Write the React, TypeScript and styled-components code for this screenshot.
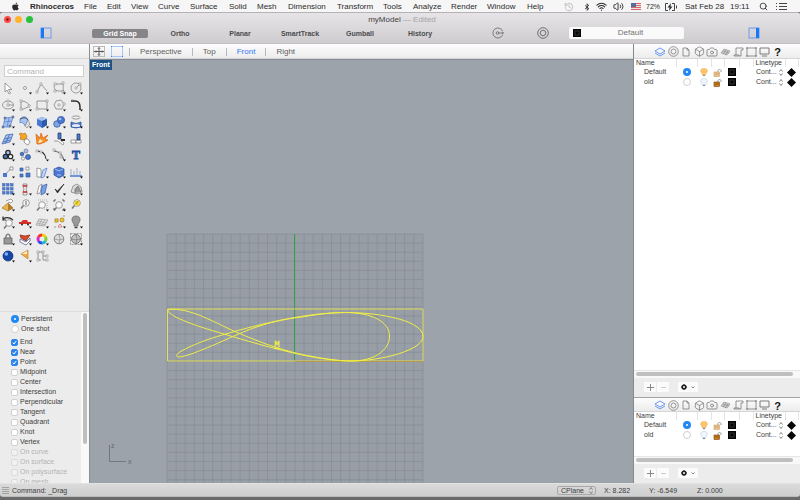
import React from "react";
import styled, { createGlobalStyle } from "styled-components";
import { FaApple, FaBluetoothB } from "react-icons/fa";
import { History, Wifi, Volume2, Search, Box, Camera } from "lucide-react";

const GlobalStyle = createGlobalStyle`
  * { box-sizing: border-box; }
  html, body { margin: 0; }
  body, button, input, select {
    font-family: "Liberation Sans", Arial, Helvetica, sans-serif;
    font-size: 7px;
    line-height: 10px;
    color: #3c3c3c;
  }
  button { border: 0; padding: 0; margin: 0; background: none; }
  svg { display: block; flex: none; }
`;

const Desktop = styled.div`
  height: 100vh;
  display: flex;
  flex-direction: column;
  background: #6c6a6c;
  overflow: hidden;
`;

/* ---------- system menu bar ---------- */

const MenuBar = styled.header`
  display: flex;
  height: 12px;
  flex: none;
  padding: 1px 12px 0 11px;
  align-items: center;
  background: #f7f6f6;
  font-size: 8px;
  line-height: 11px;
`;
const Menus = styled.nav`
  display: grid;
  grid-template-columns: 19px 54px 23px 24px 27px 32px 39px 28px 31px 49px 46px 30px 38px 36px 40px 24px;
  align-items: center;
`;
const MenuButton = styled.button<{ $strong?: boolean }>`
  font-size: 8px;
  line-height: 11px;
  text-align: left;
  white-space: nowrap;
  color: #2b2b2b;
  font-weight: ${(p) => (p.$strong ? 700 : 400)};
`;
const StatusItems = styled.div`
  margin-left: auto;
  display: grid;
  grid-template-columns: 19px 13px 17px 18px 15px 18px 21px 45px 29px 17px 12px;
  align-items: center;
  white-space: nowrap;
  color: #2b2b2b;
`;
const Percent = styled.span`
  font-size: 7px;
`;

/* ---------- window chrome ---------- */

const Window = styled.div`
  flex: 1;
  min-height: 0;
  display: flex;
  flex-direction: column;
  margin-bottom: 3px;
  border-radius: 3px;
  overflow: hidden;
`;
const Chrome = styled.div`
  flex: none;
  border-top: 1px solid #b5b3b5;
  border-bottom: 1px solid #c1bfc1;
  background: linear-gradient(#e6e4e6, #cecccf);
`;
const TitleRow = styled.div`
  display: grid;
  grid-template-columns: 1fr auto 1fr;
  align-items: center;
  height: 13px;
  padding-left: 4px;
`;
const Lights = styled.div`
  display: flex;
  gap: 4px;
`;
const Light = styled.button<{ $color: string }>`
  display: grid;
  place-items: center;
  width: 7px;
  height: 7px;
  border-radius: 50%;
  background: ${(p) => p.$color};
`;
const Title = styled.h1`
  margin: 0;
  font-size: 8px;
  line-height: 12px;
  font-weight: 400;
  color: #424242;
  span { color: #a5a3a5; }
`;
const ToolbarRow = styled.div`
  display: flex;
  align-items: center;
  height: 17px;
  padding: 0 40px 3px;
`;
const Toggles = styled.div`
  display: grid;
  grid-template-columns: repeat(6, 60px);
  justify-items: center;
  margin-left: 38px;
`;
const Toggle = styled.button<{ $on?: boolean }>`
  width: 56px;
  height: 9px;
  border-radius: 2px;
  font-size: 7px;
  line-height: 9px;
  font-weight: 700;
  white-space: nowrap;
  color: ${(p) => (p.$on ? "#fff" : "#4c4b4d")};
  background: ${(p) => (p.$on ? "#858486" : "transparent")};
`;
const RoundTools = styled.div`
  display: flex;
  gap: 33px;
  margin-left: 42px;
`;
const LayerField = styled.button`
  display: flex;
  align-items: center;
  width: 115px;
  height: 12px;
  margin-left: 20px;
  padding: 0 4px;
  border-radius: 2px;
  background: #fbfafb;
  font-size: 8px;
  color: #707070;
  span { flex: 1; }
`;
const IconButton = styled.button<{ $end?: boolean }>`
  display: grid;
  place-items: center;
  margin-left: ${(p) => (p.$end ? "auto" : "0")};
`;

/* ---------- body ---------- */

const Body = styled.div`
  flex: 1;
  min-height: 0;
  display: flex;
`;
const Strip = styled.div<{ $short?: boolean }>`
  display: flex;
  flex: none;
  align-items: center;
  height: ${(p) => (p.$short ? 14 : 15)}px;
  padding-top: 1px;
  background: linear-gradient(#fdfdfd, #ececec);
  border-bottom: 1px solid #d6d6d6;
`;
const Sidebar = styled.aside`
  width: 90px;
  flex: none;
  display: flex;
  flex-direction: column;
  background: #ececec;
  border-right: 1px solid #8b8e92;
`;
const CommandInput = styled.input`
  width: 80px;
  height: 12px;
  margin: 6px 4px 3px;
  padding: 0 2px;
  border: 1px solid #cfcfcf;
  background: #fff;
  font-size: 8px;
  outline: 0;
  &::placeholder { color: #b4b4b4; opacity: 1; }
`;
const Palette = styled.div`
  display: grid;
  grid-template-columns: repeat(5, 1fr);
  grid-auto-rows: 1fr;
  width: 84px;
  height: 184px;
`;
const Tool = styled.button`
  display: grid;
  place-items: center;
`;
const SnapArea = styled.div`
  flex: 1;
  min-height: 0;
  display: flex;
  margin-top: 47px;
  border-top: 1px solid #dcdcdc;
  overflow: hidden;
`;
const SnapList = styled.div`
  flex: 1;
  padding: 2px 0 0 11px;
`;
const SnapGroup = styled.div`
  margin-bottom: 3px;
`;
const SnapLabel = styled.label<{ $off?: boolean }>`
  display: flex;
  align-items: center;
  gap: 2px;
  height: 10px;
  white-space: nowrap;
  color: ${(p) => (p.$off ? "#b3b3b3" : "#3c3c3c")};
`;
const Check = styled.input`
  appearance: none;
  flex: none;
  width: 7px;
  height: 7px;
  margin: 0;
  border: 1px solid #d0d0d0;
  border-radius: 2px;
  background: #fff;
  &:disabled { background: #f2f2f2; border-color: #dadada; }
  &:checked {
    border-color: #2b84ee;
    background: #2b84ee url("data:image/svg+xml,%3Csvg xmlns='http://www.w3.org/2000/svg' viewBox='0 0 5 5'%3E%3Cpath d='M.8 2.6 2 4 4.3.9' fill='none' stroke='white' stroke-width='1'/%3E%3C/svg%3E");
  }
`;
const Radio = styled.input`
  appearance: none;
  flex: none;
  display: block;
  width: 8px;
  height: 8px;
  margin: 0;
  border: 1px solid #cfcfcf;
  border-radius: 50%;
  background: #fff;
  &:checked { border: 3px solid #2089f5; }
`;
const ScrollTrack = styled.div`
  width: 8px;
  padding: 1px 1px 0 2px;
  background: #f9f9f9;
`;
const ScrollThumb = styled.div`
  width: 4px;
  height: 131px;
  border-radius: 2px;
  background: #bebebe;
`;

/* ---------- viewport ---------- */

const Center = styled.main`
  flex: 1;
  min-width: 0;
  display: flex;
  flex-direction: column;
`;
const ViewIcons = styled.div`
  display: flex;
  gap: 6px;
  padding: 0 6px 0 3px;
`;
const ViewTab = styled.button<{ $active?: boolean }>`
  height: 8px;
  padding: 0 10px;
  border-left: 1px solid #b8b8b8;
  font-size: 8px;
  line-height: 8px;
  color: ${(p) => (p.$active ? "#3478f6" : "#606060")};
`;
const Viewport = styled.section`
  flex: 1;
  min-height: 0;
  display: grid;
  background: #9ca3ab;
  border-top: 1px solid #858b92;
  > * { grid-area: 1 / 1; }
`;
const Scene = styled.svg`
  width: 100%;
  height: 100%;
  min-height: 0;
`;
const ViewName = styled.h2`
  justify-self: start;
  align-self: start;
  z-index: 1;
  margin: 0;
  padding: 0 2px;
  font-size: 7px;
  line-height: 10px;
  color: #fff;
  background: #1c5288;
`;

/* ---------- right panels ---------- */

const Panels = styled.aside`
  width: 167px;
  flex: none;
  display: flex;
  flex-direction: column;
  background: #fff;
  border-left: 1px solid #85888c;
`;
const Panel = styled.section<{ $grow?: boolean }>`
  flex: ${(p) => (p.$grow ? "1" : "0 0 86px")};
  min-height: 0;
  display: flex;
  flex-direction: column;
  border-top: ${(p) => (p.$grow ? "0" : "1px solid #a2a2a2")};
`;
const PanelTabs = styled.div`
  display: grid;
  grid-template-columns: repeat(10, 13px);
  margin: 0 auto;
  padding-left: 3px;
  justify-content: center;
`;
const PanelTab = styled.button`
  display: grid;
  place-items: center;
  color: #777;
`;
const TableArea = styled.div`
  flex: 1;
  min-height: 0;
  overflow: hidden;
`;
const LayerTable = styled.table`
  width: 100%;
  table-layout: fixed;
  border-collapse: collapse;
  th, td { padding: 0; text-align: left; font-weight: 400; white-space: nowrap; overflow: hidden; }
  th { height: 8px; padding-left: 2px; line-height: 8px; border-right: 1px solid #e4e4e4; }
  td { height: 10px; line-height: 10px; vertical-align: middle; }
  td:first-child { padding-left: 10px; }
  td > svg, td > input { margin: 0 auto; }
`;
const Linetype = styled.span`
  display: flex;
  align-items: center;
  gap: 1px;
  padding-left: 3px;
`;
const PlainSelect = styled.select`
  appearance: none;
  border: 0;
  padding: 0;
  margin: 0;
  width: 22px;
  height: 10px;
  background: none;
`;
const HScroll = styled.div`
  flex: none;
  height: 8px;
  padding: 1px 7px 2px 2px;
  background: #f8f8f8;
  border-top: 1px solid #e6e6e6;
`;
const HThumb = styled.div`
  height: 4px;
  border-radius: 2px;
  background: #bfbfbf;
`;
const PanelFooter = styled.div`
  flex: none;
  display: flex;
  align-items: center;
  gap: 9px;
  height: 19px;
  padding: 0 0 1px 10px;
  background: #ececec;
`;
const ButtonPair = styled.div`
  display: flex;
  gap: 1px;
`;
const SmallButton = styled.button<{ $wide?: boolean }>`
  display: flex;
  align-items: center;
  justify-content: center;
  gap: 4px;
  width: ${(p) => (p.$wide ? 20 : 12)}px;
  height: 10px;
  border-radius: 1px;
  background: #fbfbfb;
`;

/* ---------- status bar ---------- */

const StatusBar = styled.footer`
  flex: none;
  display: flex;
  align-items: center;
  height: 14px;
  padding: 1px 2px 0;
  border-top: 1px solid #e2e2e2;
  border-bottom: 1px solid #bdbdbd;
  background: linear-gradient(#dadada, #cfcfcf);
`;
const CommandLine = styled.span`
  margin-left: 3px;
`;
const Coordinates = styled.div`
  margin-left: auto;
  display: grid;
  grid-template-columns: 47px 45px 48px 101px;
  align-items: center;
`;
const PlaneBox = styled.span`
  display: flex;
  align-items: center;
  justify-content: space-between;
  width: 39px;
  height: 9px;
  padding: 0 2px 0 3px;
  border: 1px solid #a9a9a9;
  border-radius: 2px;
  select { width: 26px; height: 7px; line-height: 7px; }
`;

/* ---------- drawings ---------- */

const B = "#4a78d0";
const L = "#a8c3f2";
const K = "#2a2a2a";
const G = "#777";

const Dots = ({ at, c = "#fff" }: { at: number[][]; c?: string }) => (
  <>
    {at.map(([x, y], i) => (
      <rect key={i} x={x - 1} y={y - 1} width="2" height="2" fill={c} stroke={G} strokeWidth=".5" />
    ))}
  </>
);
const Lens = ({ x = 9, y = 6 }: { x?: number; y?: number }) => (
  <g>
    <path d={`M${x - 2.5} ${y + 2.5}L${x - 5} ${y + 5.5}`} stroke="#777" strokeWidth="1.5" />
    <circle cx={x} cy={y} r="3.3" fill="#fafafa" stroke={G} />
  </g>
);

type Drawing = [string, React.ReactNode, boolean?];
const tools: Drawing[] = [
  ["Select", <path d="M5 3v9l2-2 2 4 1.5-.8-2-3.7H12z" fill="#fff" stroke={G} />],
  ["Point", <circle cx="8" cy="8" r="1.5" fill="#fff" stroke={G} />, true],
  ["Polyline", <><path d="M3 12 7 4l6 7" stroke={G} /><Dots at={[[3, 12], [7, 4]]} /></>, true],
  ["Curve", <><path d="M4 4h8c1 4-1 4 1 8M4 4c-2 3 0 7 3 7h6" stroke={G} /><Dots at={[[4, 4], [12, 3], [4, 11], [12, 12]]} /></>, true],
  ["Circle", <><circle cx="8" cy="8" r="5" stroke={G} /><path d="m8 8 4-4" stroke={G} /><Dots at={[[8, 8], [12, 4]]} /></>, true],
  ["Ellipse", <><ellipse cx="8" cy="8" rx="5.5" ry="4" stroke={G} /><path d="M8 8h5" stroke={G} /><Dots at={[[8, 8], [8, 4]]} /></>, true],
  ["Arc", <><path d="M4 4v9l9-4Q10 4 4 4Z" stroke={G} /><Dots at={[[4, 4], [4, 12], [12, 9]]} /></>, true],
  ["Rectangle", <><path d="M3 4h10v8H3z" stroke={G} /><Dots at={[[3, 12], [13, 4]]} /></>, true],
  ["Polygon", <><path d="m5 4 5-1 3 4-2 5H5L3 8z" stroke={G} /><Dots at={[[8, 8], [13, 7]]} /></>, true],
  ["Fillet", <><path d="M3 4h4c4 0 5 2 5 6v3" stroke={K} strokeWidth="1.5" /><path d="M3 3h3" stroke="#999" /></>, true],
  ["Surface", <><path d="m5 4 8-1-3 10H3z" fill={L} stroke={B} /><path d="m4 8 8-1M9 4 7 13" stroke={B} /><Dots at={[[5, 4], [13, 3], [3, 13], [10, 12]]} c={B} /></>, true],
  ["Sweep", <><path d="M3 5q5-5 8 1l-3 6Q6 7 3 9z" fill={L} stroke={B} /><path d="m11 6 2 4-3 4-2-2z" fill="#ddd" stroke="#888" /><path d="M3 5q6-3 8 1" stroke={K} /></>, true],
  ["Box", <><path d="m3 5 5-2 5 2v6l-5 3-5-3z" fill={B} /><path d="m3 5 5-2 5 2-5 2z" fill={L} /><path d="M8 7v7l5-3V5z" fill="#2f59aa" /></>, true],
  ["Sphere", <><circle cx="6" cy="10" r="3.3" fill="#7fa4ea" stroke="#2f5196" /><circle cx="10" cy="6" r="3.6" fill={B} stroke="#2f5196" /><circle cx="9" cy="5" r="1.3" fill={L} /></>, true],
  ["Revolve", <><path d="M3 8q5 3 10 0v5q-5 2-10 0z" fill={B} stroke="#26498c" /><ellipse cx="8" cy="3.5" rx="4" ry="1.6" fill="#eee" stroke={G} /><path d="M4 11q4-2 8 0v1.500q-4 1-8 0z" fill="#dfe9fb" /></>, true],
  ["Patch", <><path d="m6 4 7-1-3 8-8 2z" fill={L} stroke="#355ba6" /><path d="m9.500 3.500-4 9M4.500 8l7-1.500M3 11l7-2" stroke="#355ba6" /></>, true],
  ["Join", <><path d="m4 2 2 1 2-1 2 3-1 3-3 1-3-1 1-3-2-2z" fill="#f5a425" stroke="#b57a20" /><path d="m8 8 3 0 2 3-2 3-2-1-2-2z" fill="#fff" stroke={G} /></>],
  ["Explode", <><path d="m2 3 4 4 1-5 2 5 5-3-3 4 3 1-3 2-5 2-3 0z" fill="#f39021" stroke="#d9601c" /><path d="m4 12 2-4 2 2 2-2-2 3z" fill="#fff0c4" /></>],
  ["Trim", <><path d="M3 10h4l5 4 1-2-4-3" fill="#fff" stroke={G} /><path d="M7 2h3v6H7z" fill={B} stroke="#24334f" /><path d="M10 8h4v2h-4z" fill={K} /></>],
  ["Split", <><path d="M3 9h5v3H3z" fill="#fff" stroke={G} /><path d="M8 9h5v3H8z" fill="#fff" stroke={G} /><path d="M9 3h3v6H9z" fill={B} stroke="#24334f" /></>],
  ["Group", <><circle cx="8" cy="5.500" r="2.200" fill={L} stroke={K} strokeWidth="1.300" /><circle cx="5.500" cy="9.500" r="2.200" fill={B} stroke={K} strokeWidth="1.300" /><circle cx="10.500" cy="9.500" r="2.200" fill="#fff" stroke={K} strokeWidth="1.300" /></>, true],
  ["Ungroup", <><circle cx="9" cy="4" r="2" fill={L} stroke={G} /><circle cx="5" cy="7" r="1.800" fill={B} stroke="#26498c" /><circle cx="11" cy="10" r="2.500" fill={B} stroke="#26498c" /><circle cx="6" cy="11.500" r="1.600" fill="#fff" stroke={G} /></>],
  ["Blend curve", <><path d="M3 4q8 0 9 8" stroke={K} strokeWidth="1.100" /><Dots at={[[3, 4], [7, 5]]} /></>, true],
  ["Edit points", <><path d="M3 4q8 1 10 9" stroke={K} /><path d="m3 3 7 3 2 6" stroke="#999" /><Dots at={[[3, 3], [9, 6], [10, 10]]} /></>, true],
  ["Text", <text x="8" y="12" textAnchor="middle" fontFamily="Liberation Serif, serif" fontSize="12" fontWeight="700" fill={B} stroke="#244a98" strokeWidth=".8">T</text>],
  ["Move", <><path d="m5 11 6-7" stroke={G} /><path d="M3 9h4v4H3z" fill={B} /><path d="M10 3h3v3h-3z" fill="#fff" stroke={G} /></>, true],
  ["Copy", <><path d="M3 4h3v3H3zM9 9h4v4H9zM3 10h3v3H3z" fill={B} stroke="#355ba6" /><path d="M9 3h3v3H9z" fill="#fff" stroke={G} /></>],
  ["Mirror", <><path d="m3 4 4 1v8H3z" fill="#fff" stroke={G} /><path d="m9 6 4-2-3 9-3 1z" fill="#c7d7f5" stroke={B} /></>, true],
  ["Boolean", <><path d="m3 5 5-2 5 2v6l-5 3-5-3z" fill={B} stroke="#264a98" /><path d="m4 5 4 2 4-2M6 11h4" stroke="#d5e2fb" /></>, true],
  ["Align", <><path d="M2 12h12" stroke={B} strokeWidth="1.400" /><path d="M3 5v6M6 7v4M9 4v7M12 7v4" stroke="#8295bb" /></>, true],
  ["Array", <>{[4, 8, 12].map((y) => [4, 8, 12].map((x) => <rect key={x + "-" + y} x={x - 1.5} y={y - 1.5} width="2.600" height="2.600" fill={B} stroke="#355ba6" strokeWidth=".4" />))}</>, true],
  ["Twist", <><path d="M6 3h4v3L9 8l1 3v3H6v-3l1-3-1-2z" fill="#eee" stroke={G} /><path d="M6 5h4M6 11h4" stroke="#c82020" strokeWidth="1.500" /></>, true],
  ["Shear", <><path d="m5 5 3-2-2 9-3 1z" fill="#fff" stroke={G} /><path d="m8 5 5-2-2 9-4 2z" fill="#7aa0e8" stroke="#355ba6" /></>, true],
  ["Check", <path d="m4 8 2.500 4L13 3 6.500 10z" fill={K} stroke={K} />, true],
  ["Solid edit", <><path d="m3 11 2-6 4-2 4 3 1 5-5 2z" fill="#ddd" stroke={G} /><path d="M7 12V8l3-3 3 6" fill="#999" stroke="#666" /></>, true],
  ["Render mesh", <><path d="m2 11 6-5 5 5-5 3z" fill="#e8b64c" stroke="#a37929" /><path d="M8 6v8l5-3z" fill="#ad7d2a" /><path d="m6 4 5-2 2 2-2 2-3-1" fill="#fff" stroke={G} /></>, true],
  ["Zoom dynamic", <><Lens /><path d="M9 4v4M8 5h2M8 7h2" stroke={G} /></>],
  ["Zoom window", <><path d="M4 3h9v9H9" stroke="#999" strokeDasharray="1 1" /><Lens x={8} y={8} /></>, true],
  ["Zoom extents", <><Lens x={8} y={8} /><path d="M3 5V3h2M11 3h2v2M13 11v2h-2M3 11v2" stroke={K} /></>, true],
  ["Zoom selected", <><Lens /><circle cx="9" cy="6" r="2.600" fill="#f7d31c" /><path d="m8 7 2-3" stroke="#8c7200" /></>],
  ["Undo view", <><Lens x={9} y={9} /><path d="M3 5q5-3 10 1M3 2.500V6h3" stroke={K} strokeWidth="1.200" /></>, true],
  ["Car", <><path d="M2 8h2l2-2h4l1 2h3v2H2z" fill="#d8302b" /><circle cx="5" cy="10.500" r="1" fill={K} /><circle cx="11" cy="10.500" r="1" fill={K} /></>, true],
  ["Plane", <><path d="m5 5 9 1-4 6-8-1z" fill="#e4e4e4" stroke="#999" /><path d="m8 5-3 6M11 6l-4 6M4 7l9 2M3 9l9 2" stroke="#999" strokeWidth=".6" /></>, true],
  ["Select objects", <><rect x="4" y="5" width="3" height="3" fill="#f7c931" stroke="#97710d" /><circle cx="11" cy="6" r="2" fill="#f7c931" stroke="#97710d" /><path d="m9 10 2 3H7z" fill="#fff" stroke="#c55" /><path d="M3 13h2M12 2h2" stroke={G} /></>, true],
  ["Light", <><path d="M8 2c5 0 5 5 2 8v2H6v-2C3 7 3 2 8 2Z" fill="#999" stroke="#666" /><path d="M6.500 13.500h3" stroke="#444" strokeWidth="1.500" /></>, true],
  ["Lock", <><path d="M6 7V5q2-4 4 0v2" stroke="#666" strokeWidth="1.200" /><rect x="4" y="7" width="8" height="6" fill="#999" stroke="#555" /></>, true],
  ["Layers", <><path d="m3 8 6 3 4-4v3l-4 4-6-3z" fill="#fff" stroke="#3d4f86" /><path d="m3 4 5 1 5-1-4 6-5-3z" fill="#dc4a2a" stroke="#7e2312" /></>, true],
  ["Colors", <g strokeWidth="3">
    <path d="M8 4a4 4 0 0 1 3.500 2" stroke="#f3cb14" /><path d="M11.500 6a4 4 0 0 1 0 4" stroke="#7cd22d" /><path d="M11.500 10A4 4 0 0 1 8 12" stroke="#23b7d0" />
    <path d="M8 12a4 4 0 0 1-3.500-2" stroke="#304fe8" /><path d="M4.500 10a4 4 0 0 1 0-4" stroke="#d22ed0" /><path d="M4.500 6A4 4 0 0 1 8 4" stroke="#ef3428" /></g>, true],
  ["Shade", <><circle cx="8" cy="8" r="4.800" fill="#ddd" stroke="#555" /><path d="M8 3.500q2 4.500 0 9M3.500 8q4.500 2 9 0" stroke="#888" /></>],
  ["Ghost", <><rect x="2.500" y="2.500" width="11" height="11" stroke="#777" strokeDasharray="2 1" /><circle cx="8" cy="8" r="4.500" fill="#c4c4c4" stroke="#555" /><path d="M8 3.500q2 4.500 0 9M3.500 8q4.500 2 9 0" stroke="#777" /></>, true],
  ["Render", <><circle cx="8" cy="8" r="5" fill="#1646a8" stroke="#0c276b" /><circle cx="6.300" cy="6" r="1.800" fill="#7db4fa" /></>, true],
  ["Spotlight", <><path d="m4 6 7-4v9z" fill="#f2a83b" stroke="#b98743" /><path d="m5 6 5-3v3z" fill="#fff1c8" /></>, true],
  ["Block", <><path d="M4 4v8h3M4 4h5v8h4M9 8h4" stroke={G} /><Dots at={[[4, 4], [9, 4], [4, 12], [13, 8], [13, 12]]} /></>],
];

const Arrows = () => (
  <svg width="4" height="7" viewBox="0 0 4 7" fill="none" stroke="#666" strokeWidth=".8">
    <path d="m.5 2.500 1.500-2 1.500 2M.5 4.500l1.500 2 1.500-2" />
  </svg>
);
const Swatch = () => (
  <svg width="8" height="8" viewBox="0 0 8 8">
    <rect width="8" height="8" fill="#050505" />
    <rect x="2" y="2" width="4" height="4" fill="none" stroke="#444" strokeWidth=".7" />
  </svg>
);
const SplitIcon = ({ right = false }: { right?: boolean }) => (
  <svg width="12" height="12" viewBox="0 0 12 12">
    <rect x="1" y="1" width="10" height="10" fill="none" stroke="#6b9cf0" />
    <rect x={right ? 8 : 1} y="1" width="3" height="10" fill="#1879f6" />
  </svg>
);
const Bulb = ({ on }: { on: boolean }) => (
  <svg width="8" height="9" viewBox="0 0 8 9">
    <path d="M4 .5c4 0 4 3 2 5v1H2v-1C0 3.500 0 .5 4 .5Z" fill={on ? "#fbc56b" : "#f1f7fc"} stroke={on ? "#eeb45a" : "#b6cbdc"} strokeWidth=".6" />
    <path d="M2.800 7.500h2.400" stroke="#888" strokeWidth="1.200" />
  </svg>
);
const Padlock = ({ strong }: { strong: boolean }) => (
  <svg width="9" height="9" viewBox="0 0 9 9">
    <path d="M5 4V2.500q1.500-3 3 0V4" fill="none" stroke="#999" />
    <rect x="1" y="4" width="5.500" height="4.500" fill={strong ? "#d1801b" : "#e8c18c"} stroke={strong ? "#77420a" : "#cda16c"} strokeWidth=".6" />
    <path d="M2 6h4" stroke={strong ? "#633908" : "#c5965c"} strokeWidth=".6" />
  </svg>
);
const line = { fill: "none", stroke: "#7b7b7b", strokeWidth: 0.8 };
const panelIcons: [string, React.ReactNode][] = [
  ["Layers", <svg width="12" height="10" viewBox="0 0 12 10" fill="none" stroke="#4a82ee" strokeWidth=".8"><path d="m1 4 5-3 5 3-5 3zM1 6l5 3 5-3" /></svg>],
  ["Properties", <svg width="11" height="11" viewBox="0 0 11 11" {...line}><circle cx="5.500" cy="5.500" r="4.800" /><circle cx="5.500" cy="5.500" r="2.500" /></svg>],
  ["Notes", <svg width="8" height="10" viewBox="0 0 8 10" {...line}><path d="M1 1h4l2 2v6H1zM5 1v2h2" /></svg>],
  ["Objects", <Box size={11} strokeWidth={1.6} />],
  ["Views", <Camera size={12} strokeWidth={1.6} />],
  ["Planes", <svg width="11" height="8" viewBox="0 0 11 8" fill="#ccc" stroke="#888" strokeWidth=".6"><path d="m4 1 6 2-3 4-6-2zM6 2 3 6M8 3 5 7M3 3l6 2" /></svg>],
  ["Scripts", <svg width="11" height="10" viewBox="0 0 11 10" {...line}><path d="M3 8V1h7v2H8v6H1V8h5v1" /></svg>],
  ["Frames", <svg width="11" height="10" viewBox="0 0 11 10" {...line}><path d="M1 1h9v8H1z" /><path d="M0 1h2M9 1h2M0 9h2M9 9h2" strokeWidth="1.200" /></svg>],
  ["Display", <svg width="11" height="10" viewBox="0 0 11 10" {...line} strokeWidth="1"><path d="M1 1h9v6H1zM3 9h5" /></svg>],
  ["Help", <svg width="9" height="11" viewBox="0 0 9 11"><text x="4.500" y="9.500" textAnchor="middle" fontSize="11" fontWeight="700" fill="#111">?</text></svg>],
];

const GRID_X = Array.from({ length: 29 }, (_, i) => 167 + i * 9.14);
const GRID_Y = Array.from({ length: 28 }, (_, i) => 234 + i * 9.1);

function ModelView() {
  return (
    <Scene viewBox="90 60 543 423" preserveAspectRatio="xMidYMid slice" fill="none">
      <rect x="167" y="234" width="256" height="256" fill="#979ea6" />
      <path d={GRID_X.map((x) => `M${x} 234V490`).join("") + GRID_Y.map((y) => `M167 ${y}H423`).join("")} stroke="#868d95" strokeWidth=".7" />
      <path d="M294.500 234V361" stroke="#36a044" />
      <path d="M167.500 309H423V361H167.500z" stroke="#e0de5a" />
      <path d="M295 361.500H423" stroke="#b88d40" strokeWidth=".7" />
      <g stroke="#f1ef45">
        <path d="M168 309.500C190 307 215 323 236 332C264 344 279 349 302 354.500C320 358 337 361 352 361C373 361 389.500 351 389.500 336C389.500 322 372 312.500 345 312.500C308 312.500 263 323 224 334.500C200 341 174 353 176.500 356C179 360 203 350 234 336C260 324 283 319 302 317C320 314 333 312.500 345 312.500C382 312.500 423 321 423 336.500C423 350 382 361 350 361C317 361 267 347 224 334C192 325 166 315 168 309.500Z" />
      </g>
      <text x="277" y="347" textAnchor="middle" fontFamily="Liberation Mono, monospace" fontSize="9" fill="#f1ef45" stroke="#f1ef45" strokeWidth=".3">M</text>
      <path d="M274 348.500H280" stroke="#f1ef45" />
      <path d="M109.500 445V461.500H126" stroke="#717880" />
      <text x="111" y="448" fontSize="7" fill="#5f666d">z</text>
      <text x="128" y="464" fontSize="7" fill="#5f666d">x</text>
    </Scene>
  );
}

function LayerPanel({ id, grow }: { id: string; grow?: boolean }) {
  return (
    <Panel $grow={grow}>
      <Strip $short={!grow}>
        <PanelTabs>
          {panelIcons.map(([name, icon]) => (
            <PanelTab key={name} aria-label={name}>{icon}</PanelTab>
          ))}
        </PanelTabs>
      </Strip>
      <TableArea>
        <LayerTable>
          <colgroup>
            {[42, 21, 14, 13, 15, 14, 32, 13, 2].map((w, i) => <col key={i} width={w} />)}
          </colgroup>
          <thead>
            <tr><th>Name</th><th /><th /><th /><th /><th /><th>Linetype</th><th /><th /></tr>
          </thead>
          <tbody>
            {["Default", "old"].map((name, i) => (
              <tr key={name}>
                <td>{name}</td>
                <td><Radio type="radio" name={id} defaultChecked={i === 0} aria-label={name} /></td>
                <td><Bulb on={i === 0} /></td>
                <td><Padlock strong={i === 1} /></td>
                <td><Swatch /></td>
                <td />
                <td>
                  <Linetype>
                    <PlainSelect aria-label={`${name} linetype`}><option>Cont...</option></PlainSelect>
                    <Arrows />
                  </Linetype>
                </td>
                <td><svg width="9" height="9" viewBox="0 0 9 9"><path d="m4.500 0 4.500 4.500L4.500 9 0 4.500z" fill="#080808" /></svg></td>
                <td />
              </tr>
            ))}
          </tbody>
        </LayerTable>
      </TableArea>
      <HScroll><HThumb /></HScroll>
      <PanelFooter>
        <ButtonPair>
          <SmallButton aria-label="Add layer"><svg width="7" height="7" viewBox="0 0 7 7"><path d="M0 3.500h7M3.500 0v7" stroke="#888" /></svg></SmallButton>
          <SmallButton aria-label="Remove layer"><svg width="7" height="7" viewBox="0 0 7 7"><path d="M1 3.500h5" stroke="#ccc" /></svg></SmallButton>
        </ButtonPair>
        <SmallButton $wide aria-label="Layer actions">
          <svg width="6" height="6" viewBox="0 0 6 6"><circle cx="3" cy="3" r="1.800" fill="none" stroke="#222" strokeWidth="1.600" /><path d="M3 0v1M3 5v1M0 3h1M5 3h1M1 1l.6.600M5 5l-.6-.6M1 5l.6-.6M5 1l-.6.600" stroke="#222" /></svg>
          <svg width="4" height="3" viewBox="0 0 4 3"><path d="m.5.500 1.500 1.500L3.500.500" fill="none" stroke="#666" strokeWidth=".8" /></svg>
        </SmallButton>
      </PanelFooter>
    </Panel>
  );
}

const menus = ["File", "Edit", "View", "Curve", "Surface", "Solid", "Mesh", "Dimension", "Transform", "Tools", "Analyze", "Render", "Window", "Help"];
const toggles = ["Grid Snap", "Ortho", "Planar", "SmartTrack", "Gumball", "History"];
const snaps = ["End", "Near", "Point", "Midpoint", "Center", "Intersection", "Perpendicular", "Tangent", "Quadrant", "Knot", "Vertex", "On curve", "On surface", "On polysurface", "On mesh"];

export default function App() {
  return (
    <Desktop>
      <GlobalStyle />
      <MenuBar>
        <Menus>
          <MenuButton aria-label="Apple"><FaApple size={9} /></MenuButton>
          <MenuButton $strong>Rhinoceros</MenuButton>
          {menus.map((m) => <MenuButton key={m}>{m}</MenuButton>)}
        </Menus>
        <StatusItems>
          <History size={10} color="#aaa" strokeWidth={1.6} />
          <FaBluetoothB size={8} />
          <Wifi size={11} strokeWidth={2.4} />
          <Volume2 size={11} strokeWidth={2} />
          <svg width="10" height="7" viewBox="0 0 10 7">
            <rect width="10" height="7" fill="#f4e4e4" />
            <path d="M0 .5h10M0 2.500h10M0 4.500h10M0 6.500h10" stroke="#d2686c" />
            <rect width="5" height="4" fill="#5b6d9f" />
          </svg>
          <Percent>72%</Percent>
          <svg width="14" height="8" viewBox="0 0 14 8" fill="none" stroke="#444">
            <path d="M4 .5H1.500v7H4M8 .5h2.500v7H8M12.500 2.500v3" /><path d="M7 0 3.500 4.500h2L5 8l3.500-4.500h-2z" fill="#333" stroke="none" />
          </svg>
          <span>Sat Feb 28</span>
          <span>19:11</span>
          <Search size={9} strokeWidth={2.2} />
          <svg width="11" height="7" viewBox="0 0 11 7"><path d="M0 .5h1M3 .5h8M0 3.500h1M3 3.500h8M0 6.500h1M3 6.500h8" stroke="#444" /></svg>
        </StatusItems>
      </MenuBar>

      <Window>
        <Chrome>
          <TitleRow>
            <Lights>
              <Light $color="#fb4c48" aria-label="Close"><svg width="3" height="3" viewBox="0 0 3 3"><circle cx="1.500" cy="1.500" r="1.200" fill="#7c1010" /></svg></Light>
              <Light $color="#fdb32b" aria-label="Minimize" />
              <Light $color="#27c13d" aria-label="Full screen" />
            </Lights>
            <Title>myModel <span>— Edited</span></Title>
          </TitleRow>
          <ToolbarRow>
            <IconButton aria-label="Toggle left sidebar"><SplitIcon /></IconButton>
            <Toggles>
              {toggles.map((t, i) => <Toggle key={t} $on={i === 0} aria-pressed={i === 0}>{t}</Toggle>)}
            </Toggles>
            <RoundTools>
              <IconButton aria-label="Record history">
                <svg width="12" height="12" viewBox="0 0 12 12" fill="none" stroke="#666" strokeWidth=".8"><path d="M10.500 4A5 5 0 1 0 10.500 8M6 6h5.500M10 4.800l1.500 1.200L10 7.200" /><circle cx="5.500" cy="6" r="1.300" /></svg>
              </IconButton>
              <IconButton aria-label="Target">
                <svg width="12" height="12" viewBox="0 0 12 12" fill="none" stroke="#666" strokeWidth=".9"><circle cx="6" cy="6" r="5.300" /><circle cx="6" cy="6" r="2.800" /></svg>
              </IconButton>
            </RoundTools>
            <LayerField><Swatch /><span>Default</span></LayerField>
            <IconButton $end aria-label="Toggle right sidebar"><SplitIcon right /></IconButton>
          </ToolbarRow>
        </Chrome>

        <Body>
          <Sidebar>
            <Strip />
            <CommandInput placeholder="Command" aria-label="Command" />
            <Palette>
              {tools.map(([name, drawing, more]) => (
                <Tool key={name} aria-label={name}>
                  <svg width="16" height="16" viewBox="0 0 16 16" fill="none" strokeWidth=".7">
                    {drawing}
                    {more && <path d="M12 12.500h3l-1.500 2z" fill="#111" />}
                  </svg>
                </Tool>
              ))}
            </Palette>
            <SnapArea>
              <SnapList>
                <SnapGroup>
                  {["Persistent", "One shot"].map((s, i) => (
                    <SnapLabel key={s}><Radio type="radio" name="snap-mode" defaultChecked={i === 0} />{s}</SnapLabel>
                  ))}
                </SnapGroup>
                {snaps.map((s, i) => (
                  <SnapLabel key={s} $off={i > 10}><Check type="checkbox" defaultChecked={i < 3} disabled={i > 10} />{s}</SnapLabel>
                ))}
              </SnapList>
              <ScrollTrack><ScrollThumb /></ScrollTrack>
            </SnapArea>
          </Sidebar>

          <Center>
            <Strip>
              <ViewIcons>
                <IconButton aria-label="Four views">
                  <svg width="12" height="11" viewBox="0 0 12 11" fill="none" stroke="#777"><rect x=".5" y=".5" width="11" height="10" stroke="#bbb" /><path d="M6 1v9M1 5.500h10" stroke="#555" /><path d="M3 4v3M9 4v3M4.500 2.500h3M4.500 8.500h3" strokeWidth=".7" /></svg>
                </IconButton>
                <IconButton aria-label="Single view">
                  <svg width="12" height="11" viewBox="0 0 12 11" fill="none"><rect x=".5" y=".5" width="11" height="10" stroke="#a9c6f8" /><path d="M0 .5h1M11 .5h1M0 10.500h1M11 10.500h1" stroke="#3c7cf0" /></svg>
                </IconButton>
              </ViewIcons>
              {["Perspective", "Top", "Front", "Right"].map((v) => (
                <ViewTab key={v} $active={v === "Front"}>{v}</ViewTab>
              ))}
            </Strip>
            <Viewport>
              <ViewName>Front</ViewName>
              <ModelView />
            </Viewport>
          </Center>

          <Panels>
            <LayerPanel id="layers-upper" grow />
            <LayerPanel id="layers-lower" />
          </Panels>
        </Body>

        <StatusBar>
          <svg width="7" height="7" viewBox="0 0 7 7"><path d="M0 .5h7M0 2.500h7M0 4.500h7M0 6.500h7" stroke="#969696" strokeWidth=".8" /></svg>
          <CommandLine>Command: _Drag</CommandLine>
          <Coordinates>
            <PlaneBox><PlainSelect aria-label="Coordinate plane"><option>CPlane</option></PlainSelect><Arrows /></PlaneBox>
            <span>X: 8.282</span>
            <span>Y: -6.549</span>
            <span>Z: 0.000</span>
          </Coordinates>
        </StatusBar>
      </Window>
    </Desktop>
  );
}
